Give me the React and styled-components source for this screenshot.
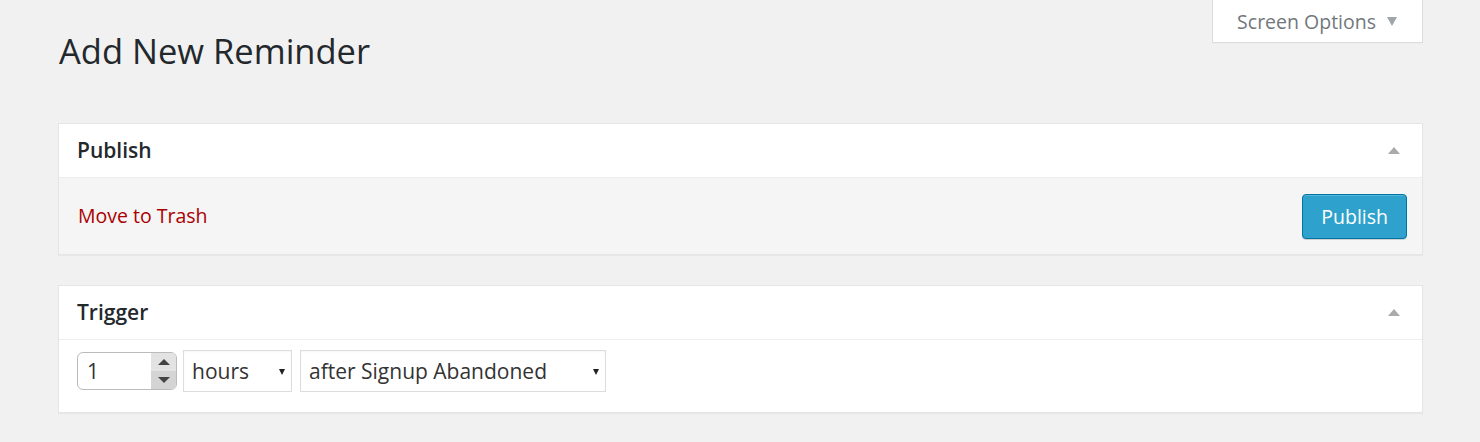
import React from "react";
import styled, { createGlobalStyle } from "styled-components";

const GlobalStyle = createGlobalStyle`
  html, body { margin: 0; padding: 0; }
  body {
    background: #f1f1f1;
    font-family: "Open Sans", "Liberation Sans", sans-serif;
    color: #444;
    font-size: 19.5px;
  }
  * { box-sizing: border-box; }
`;

const Page = styled.div`
  padding: 0 57px 30px 58px;
`;

const TopRow = styled.div`
  display: flex;
  justify-content: space-between;
  align-items: flex-start;
  margin-bottom: 50px;
`;

const Title = styled.h1`
  margin: 28px 0 0 1px;
  font-size: 34.5px;
  line-height: 45px;
  font-weight: 400;
  color: #23282d;
`;

const ScreenTab = styled.button`
  display: flex;
  align-items: center;
  gap: 11px;
  height: 43px;
  padding: 0 25px 0 24px;
  background: #fff;
  border: 1px solid #ddd;
  border-top: none;
  box-shadow: 0 1px 1px -1px rgba(0, 0, 0, 0.1);
  font-family: inherit;
  font-size: 19.5px;
  color: #72777c;
  cursor: pointer;
`;

const DownArrow = styled.span`
  width: 0;
  height: 0;
  border-left: 5.5px solid transparent;
  border-right: 5.5px solid transparent;
  border-top: 9px solid #a0a5aa;
  margin-top: 1px;
`;

const Box = styled.section`
  background: #fff;
  border: 1px solid #e5e5e5;
  box-shadow: 0 1px 1px rgba(0, 0, 0, 0.04);
  margin-bottom: 30px;
`;

const BoxHeader = styled.div`
  display: flex;
  align-items: center;
  justify-content: space-between;
  height: 54px;
  padding: 0 22px 0 18px;
  border-bottom: 1px solid #eee;
`;

const BoxTitle = styled.h2`
  margin: 0 0 2px 0;
  font-size: 21px;
  font-weight: 600;
  color: #23282d;
`;

const UpArrow = styled.span`
  width: 0;
  height: 0;
  border-left: 6px solid transparent;
  border-right: 6px solid transparent;
  border-bottom: 7px solid #aaa;
`;

const Actions = styled.div`
  display: flex;
  align-items: center;
  justify-content: space-between;
  background: #f5f5f5;
  padding: 16px 15px 15px 19px;
`;

const TrashLink = styled.a`
  color: #a00;
  text-decoration: none;
  font-size: 19.5px;
  margin-bottom: 3px;
`;

const PrimaryButton = styled.button`
  height: 45px;
  padding: 0 18px;
  background: #2ea2cc;
  border: 1px solid #0074a2;
  border-radius: 4px;
  box-shadow: inset 0 1px 0 rgba(120, 200, 230, 0.5), 0 1px 0 rgba(0, 0, 0, 0.15);
  color: #fff;
  font-family: inherit;
  font-size: 19.5px;
  cursor: pointer;
`;

const Inside = styled.div`
  display: flex;
  align-items: center;
  gap: 6px;
  padding: 10px 18px 20px 18px;
`;

const NumberField = styled.div`
  display: flex;
  width: 100px;
  height: 38px;
  border: 1px solid #bbb;
  border-radius: 6px;
  overflow: hidden;
  background: #fff;
`;

const NumberInput = styled.input`
  flex: 1;
  min-width: 0;
  border: none;
  outline: none;
  padding: 0 0 0 9px;
  font-family: inherit;
  font-size: 21px;
  color: #333;
  background: transparent;
`;

const Spinner = styled.div`
  display: flex;
  flex-direction: column;
  width: 25px;
`;

const SpinButton = styled.span`
  flex: 1;
  display: flex;
  align-items: center;
  justify-content: center;
  background: ${(p) => (p.$down ? "#d4d4d4" : "#e3e3e3")};
  &::after {
    content: "";
    width: 0;
    height: 0;
    border-left: 6px solid transparent;
    border-right: 6px solid transparent;
    ${(p) =>
      p.$down
        ? "border-top: 6px solid #444;"
        : "border-bottom: 6px solid #444;"}
  }
`;

const SelectWrap = styled.div`
  position: relative;
  width: ${(p) => p.$width}px;
  height: 42px;
  margin-left: ${(p) => p.$gap || 0}px;
`;

const Select = styled.select`
  appearance: none;
  -webkit-appearance: none;
  width: 100%;
  height: 100%;
  padding: 0 24px 0 8px;
  border: 1px solid #ddd;
  border-radius: 0;
  background: #fff;
  font-family: inherit;
  font-size: 21px;
  color: #333;
  box-shadow: inset 0 1px 2px rgba(0, 0, 0, 0.04);
  outline: none;
`;

const Caret = styled.span`
  position: absolute;
  right: 7px;
  top: 19px;
  width: 0;
  height: 0;
  border-left: 3.5px solid transparent;
  border-right: 3.5px solid transparent;
  border-top: 6px solid #222;
  pointer-events: none;
`;

export default function App() {
  return (
    <>
      <GlobalStyle />
      <Page>
        <TopRow>
          <Title>Add New Reminder</Title>
          <ScreenTab>
            Screen Options
            <DownArrow />
          </ScreenTab>
        </TopRow>

        <Box>
          <BoxHeader>
            <BoxTitle>Publish</BoxTitle>
            <UpArrow />
          </BoxHeader>
          <Actions>
            <TrashLink href="#">Move to Trash</TrashLink>
            <PrimaryButton>Publish</PrimaryButton>
          </Actions>
        </Box>

        <Box>
          <BoxHeader>
            <BoxTitle>Trigger</BoxTitle>
            <UpArrow />
          </BoxHeader>
          <Inside>
            <NumberField>
              <NumberInput type="text" defaultValue="1" />
              <Spinner>
                <SpinButton />
                <SpinButton $down />
              </Spinner>
            </NumberField>
            <SelectWrap $width={109}>
              <Select defaultValue="hours">
                <option value="hours">hours</option>
                <option value="days">days</option>
              </Select>
              <Caret />
            </SelectWrap>
            <SelectWrap $width={306} $gap={2}>
              <Select defaultValue="abandoned">
                <option value="abandoned">after Signup Abandoned</option>
              </Select>
              <Caret />
            </SelectWrap>
          </Inside>
        </Box>
      </Page>
    </>
  );
}
